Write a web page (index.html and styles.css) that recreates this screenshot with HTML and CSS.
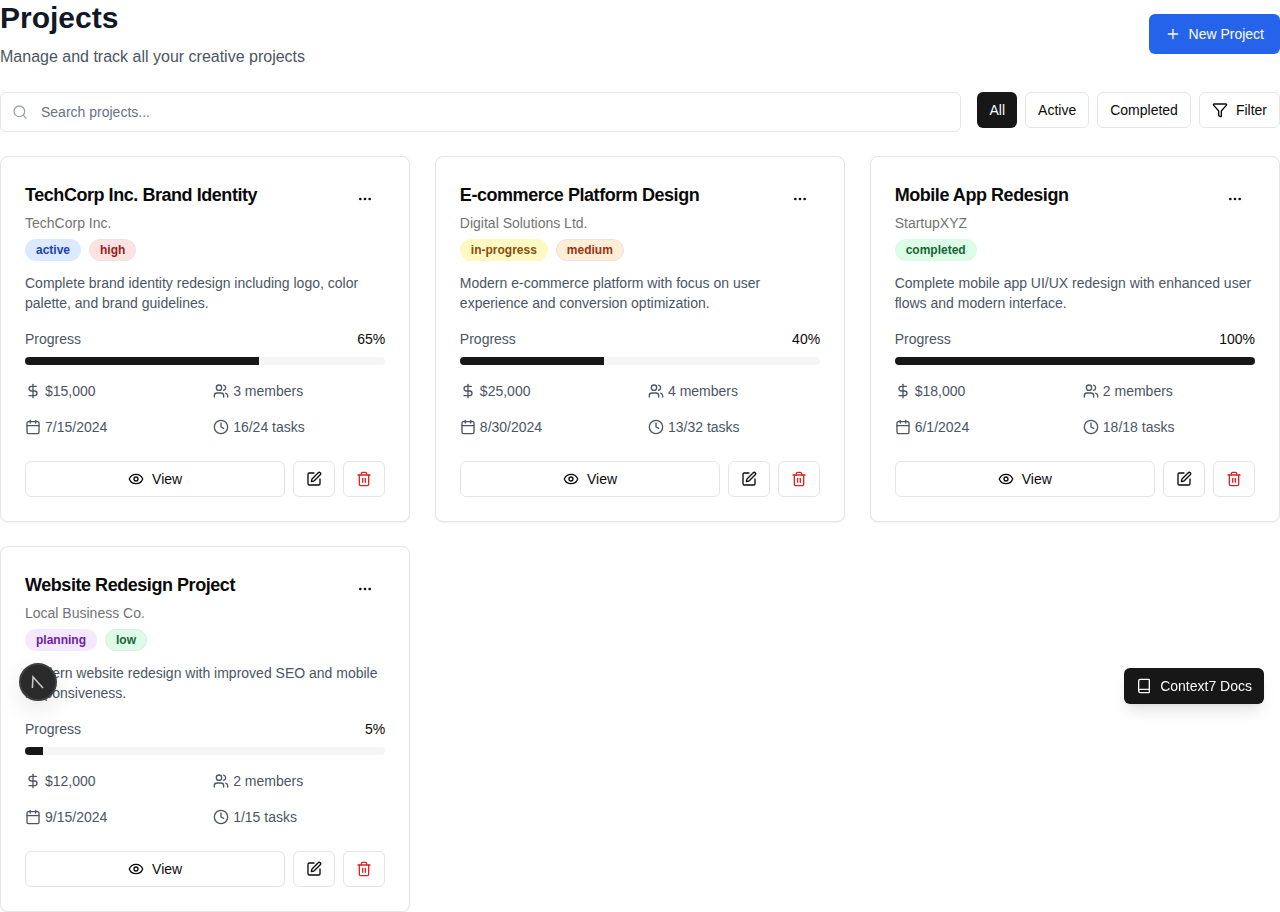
FILE: index.html
```html
<!DOCTYPE html>
<html lang="en">
  <head>
    <meta charset="UTF-8" />
    <meta name="viewport" content="width=device-width, initial-scale=1.0" />
    <title>Projects</title>
    <link rel="stylesheet" href="styles.css">
  </head>
  <body>
    <svg class="icon-defs" aria-hidden="true">
      <symbol id="i-search" viewBox="0 0 24 24"><circle cx="11" cy="11" r="8"/><path d="m21 21-4.3-4.3"/></symbol>
      <symbol id="i-plus" viewBox="0 0 24 24"><path d="M5 12h14"/><path d="M12 5v14"/></symbol>
      <symbol id="i-funnel" viewBox="0 0 24 24"><path d="M10 20a1 1 0 0 0 .553.895l2 1A1 1 0 0 0 14 21v-7a2 2 0 0 1 .517-1.341L21.74 4.67A1 1 0 0 0 21 3H3a1 1 0 0 0-.742 1.67l7.225 7.989A2 2 0 0 1 10 14z"/></symbol>
      <symbol id="i-ellipsis" viewBox="0 0 24 24"><circle cx="12" cy="12" r="1"/><circle cx="19" cy="12" r="1"/><circle cx="5" cy="12" r="1"/></symbol>
      <symbol id="i-dollar" viewBox="0 0 24 24"><path d="M12 2v20"/><path d="M17 5H9.5a3.5 3.5 0 0 0 0 7h5a3.5 3.5 0 0 1 0 7H6"/></symbol>
      <symbol id="i-users" viewBox="0 0 24 24"><path d="M16 21v-2a4 4 0 0 0-4-4H6a4 4 0 0 0-4 4v2"/><circle cx="9" cy="7" r="4"/><path d="M22 21v-2a4 4 0 0 0-3-3.87"/><path d="M16 3.13a4 4 0 0 1 0 7.75"/></symbol>
      <symbol id="i-calendar" viewBox="0 0 24 24"><path d="M8 2v4"/><path d="M16 2v4"/><rect width="18" height="18" x="3" y="4" rx="2"/><path d="M3 10h18"/></symbol>
      <symbol id="i-clock" viewBox="0 0 24 24"><circle cx="12" cy="12" r="10"/><path d="M12 6v6l4 2"/></symbol>
      <symbol id="i-eye" viewBox="0 0 24 24"><path d="M2.062 12.348a1 1 0 0 1 0-.696 10.75 10.75 0 0 1 19.876 0 1 1 0 0 1 0 .696 10.75 10.75 0 0 1-19.876 0"/><circle cx="12" cy="12" r="3"/></symbol>
      <symbol id="i-pen" viewBox="0 0 24 24"><path d="M12 3H5a2 2 0 0 0-2 2v14a2 2 0 0 0 2 2h14a2 2 0 0 0 2-2v-7"/><path d="M18.375 2.625a1 1 0 0 1 3 3l-9.013 9.014a2 2 0 0 1-.853.505l-2.873.84a.5.5 0 0 1-.62-.62l.84-2.873a2 2 0 0 1 .506-.852z"/></symbol>
      <symbol id="i-trash" viewBox="0 0 24 24"><path d="M3 6h18"/><path d="M19 6v14c0 1-1 2-2 2H7c-1 0-2-1-2-2V6"/><path d="M8 6V4c0-1 1-2 2-2h4c1 0 2 1 2 2v2"/><path d="M10 11v6"/><path d="M14 11v6"/></symbol>
      <symbol id="i-book" viewBox="0 0 24 24"><path d="M4 19.5v-15A2.5 2.5 0 0 1 6.5 2H19a1 1 0 0 1 1 1v18a1 1 0 0 1-1 1H6.5a1 1 0 0 1 0-5H20"/></symbol>
    </svg>

    <main class="page">
      <header class="page-header">
        <div>
          <h1>Projects</h1>
          <p class="page-sub">Manage and track all your creative projects</p>
        </div>
        <button class="new-button"><svg class="icon"><use href="#i-plus"/></svg>New Project</button>
      </header>

      <div class="toolbar">
        <label class="search">
          <svg class="icon"><use href="#i-search"/></svg>
          <input type="text" placeholder="Search projects..." />
        </label>
        <div class="filters">
          <button class="btn btn-dark">All</button>
          <button class="btn">Active</button>
          <button class="btn">Completed</button>
          <button class="btn"><svg class="icon"><use href="#i-funnel"/></svg>Filter</button>
        </div>
      </div>

      <section class="grid">
        <article class="card">
          <div class="card-top">
            <div class="card-heading">
              <h3>TechCorp Inc. Brand Identity</h3>
              <p class="client">TechCorp Inc.</p>
              <div class="badges">
                <span class="badge blue">active</span>
                <span class="badge red bordered">high</span>
              </div>
            </div>
            <button class="more"><svg class="icon"><use href="#i-ellipsis"/></svg></button>
          </div>
          <p class="desc">Complete brand identity redesign including logo, color palette, and brand guidelines.</p>
          <div class="progress-row"><span>Progress</span><span class="pct">65%</span></div>
          <div class="bar"><div class="bar-fill" style="width: 65%"></div></div>
          <div class="meta">
            <div class="meta-item"><svg class="icon"><use href="#i-dollar"/></svg>$15,000</div>
            <div class="meta-item"><svg class="icon"><use href="#i-users"/></svg>3 members</div>
            <div class="meta-item"><svg class="icon"><use href="#i-calendar"/></svg>7/15/2024</div>
            <div class="meta-item"><svg class="icon"><use href="#i-clock"/></svg>16/24 tasks</div>
          </div>
          <div class="actions">
            <button class="btn btn-view"><svg class="icon"><use href="#i-eye"/></svg>View</button>
            <button class="btn btn-icon"><svg class="icon"><use href="#i-pen"/></svg></button>
            <button class="btn btn-icon btn-delete"><svg class="icon"><use href="#i-trash"/></svg></button>
          </div>
        </article>

        <article class="card">
          <div class="card-top">
            <div class="card-heading">
              <h3>E-commerce Platform Design</h3>
              <p class="client">Digital Solutions Ltd.</p>
              <div class="badges">
                <span class="badge yellow">in-progress</span>
                <span class="badge orange bordered">medium</span>
              </div>
            </div>
            <button class="more"><svg class="icon"><use href="#i-ellipsis"/></svg></button>
          </div>
          <p class="desc">Modern e-commerce platform with focus on user experience and conversion optimization.</p>
          <div class="progress-row"><span>Progress</span><span class="pct">40%</span></div>
          <div class="bar"><div class="bar-fill" style="width: 40%"></div></div>
          <div class="meta">
            <div class="meta-item"><svg class="icon"><use href="#i-dollar"/></svg>$25,000</div>
            <div class="meta-item"><svg class="icon"><use href="#i-users"/></svg>4 members</div>
            <div class="meta-item"><svg class="icon"><use href="#i-calendar"/></svg>8/30/2024</div>
            <div class="meta-item"><svg class="icon"><use href="#i-clock"/></svg>13/32 tasks</div>
          </div>
          <div class="actions">
            <button class="btn btn-view"><svg class="icon"><use href="#i-eye"/></svg>View</button>
            <button class="btn btn-icon"><svg class="icon"><use href="#i-pen"/></svg></button>
            <button class="btn btn-icon btn-delete"><svg class="icon"><use href="#i-trash"/></svg></button>
          </div>
        </article>

        <article class="card">
          <div class="card-top">
            <div class="card-heading">
              <h3>Mobile App Redesign</h3>
              <p class="client">StartupXYZ</p>
              <div class="badges">
                <span class="badge green">completed</span>
              </div>
            </div>
            <button class="more"><svg class="icon"><use href="#i-ellipsis"/></svg></button>
          </div>
          <p class="desc">Complete mobile app UI/UX redesign with enhanced user flows and modern interface.</p>
          <div class="progress-row"><span>Progress</span><span class="pct">100%</span></div>
          <div class="bar"><div class="bar-fill" style="width: 100%"></div></div>
          <div class="meta">
            <div class="meta-item"><svg class="icon"><use href="#i-dollar"/></svg>$18,000</div>
            <div class="meta-item"><svg class="icon"><use href="#i-users"/></svg>2 members</div>
            <div class="meta-item"><svg class="icon"><use href="#i-calendar"/></svg>6/1/2024</div>
            <div class="meta-item"><svg class="icon"><use href="#i-clock"/></svg>18/18 tasks</div>
          </div>
          <div class="actions">
            <button class="btn btn-view"><svg class="icon"><use href="#i-eye"/></svg>View</button>
            <button class="btn btn-icon"><svg class="icon"><use href="#i-pen"/></svg></button>
            <button class="btn btn-icon btn-delete"><svg class="icon"><use href="#i-trash"/></svg></button>
          </div>
        </article>

        <article class="card">
          <div class="card-top">
            <div class="card-heading">
              <h3>Website Redesign Project</h3>
              <p class="client">Local Business Co.</p>
              <div class="badges">
                <span class="badge purple">planning</span>
                <span class="badge green bordered">low</span>
              </div>
            </div>
            <button class="more"><svg class="icon"><use href="#i-ellipsis"/></svg></button>
          </div>
          <p class="desc">Modern website redesign with improved SEO and mobile responsiveness.</p>
          <div class="progress-row"><span>Progress</span><span class="pct">5%</span></div>
          <div class="bar"><div class="bar-fill" style="width: 5%"></div></div>
          <div class="meta">
            <div class="meta-item"><svg class="icon"><use href="#i-dollar"/></svg>$12,000</div>
            <div class="meta-item"><svg class="icon"><use href="#i-users"/></svg>2 members</div>
            <div class="meta-item"><svg class="icon"><use href="#i-calendar"/></svg>9/15/2024</div>
            <div class="meta-item"><svg class="icon"><use href="#i-clock"/></svg>1/15 tasks</div>
          </div>
          <div class="actions">
            <button class="btn btn-view"><svg class="icon"><use href="#i-eye"/></svg>View</button>
            <button class="btn btn-icon"><svg class="icon"><use href="#i-pen"/></svg></button>
            <button class="btn btn-icon btn-delete"><svg class="icon"><use href="#i-trash"/></svg></button>
          </div>
        </article>
      </section>
    </main>

    <div class="dev-indicator">
      <svg width="16" height="16" viewBox="0 0 16 16" fill="none" stroke="#c4c4c4" stroke-width="1.6">
        <path d="M2.4 14 3 3l10 11"/>
      </svg>
    </div>
    <button class="docs-button"><svg class="icon"><use href="#i-book"/></svg>Context7 Docs</button>
  </body>
</html>
```

FILE: styles.css
```css
* {
  box-sizing: border-box;
}
body {
  margin: 0;
  font-family: "Liberation Sans", Arial, sans-serif;
  color: #0a0a0a;
  background-color: #fff;
}
h1, h3, p {
  margin: 0;
}
button {
  font-family: inherit;
  cursor: pointer;
}
.icon-defs {
  display: none;
}
.icon {
  width: 16px;
  height: 16px;
  flex-shrink: 0;
  fill: none;
  stroke: currentColor;
  stroke-width: 2;
  stroke-linecap: round;
  stroke-linejoin: round;
}

.page-header {
  display: flex;
  justify-content: space-between;
  align-items: center;
  height: 68px;
  margin-bottom: 24px;
}
h1 {
  font-size: 30px;
  line-height: 36px;
  font-weight: 700;
  color: #111827;
}
.page-sub {
  margin-top: 9px;
  font-size: 16px;
  line-height: 24px;
  color: #4b5563;
}
.new-button {
  display: flex;
  align-items: center;
  gap: 8px;
  height: 40px;
  padding: 0 16px;
  font-size: 14px;
  color: #fff;
  background-color: #2563eb;
  border: none;
  border-radius: 6px;
}

.toolbar {
  display: flex;
  align-items: flex-start;
  gap: 16px;
  margin-bottom: 24px;
}
.search {
  flex: 1;
  position: relative;
  display: block;
}
.search .icon {
  position: absolute;
  left: 12px;
  top: 12px;
  color: #9ca3af;
}
.search input {
  display: block;
  width: 100%;
  height: 40px;
  padding: 0 12px 0 40px;
  font-family: inherit;
  font-size: 14px;
  border: 1px solid #e5e5e5;
  border-radius: 6px;
  outline: none;
}
.search input::placeholder {
  color: #6b7280;
}
.filters {
  display: flex;
  gap: 8px;
}
.btn {
  display: flex;
  align-items: center;
  justify-content: center;
  gap: 8px;
  height: 36px;
  padding: 0 12px;
  font-size: 14px;
  color: #0a0a0a;
  background-color: #fff;
  border: 1px solid #e5e5e5;
  border-radius: 6px;
}
.btn-dark {
  color: #fafafa;
  background-color: #171717;
  border: none;
}

.grid {
  display: grid;
  grid-template-columns: repeat(3, 410.3px);
  justify-content: space-between;
  row-gap: 24px;
}
.card {
  padding: 24px;
  background-color: #fff;
  border: 1px solid #e5e5e5;
  border-radius: 8px;
  box-shadow: 0 1px 2px rgba(0, 0, 0, 0.05);
}
.card-top {
  display: flex;
  justify-content: space-between;
  align-items: flex-start;
}
h3 {
  font-size: 18px;
  line-height: 28px;
  font-weight: 700;
  letter-spacing: -0.025em;
}
.client {
  margin-top: 4px;
  font-size: 14px;
  line-height: 20px;
  color: #737373;
}
.badges {
  display: flex;
  gap: 8px;
  margin-top: 6px;
}
.badge {
  height: 22px;
  padding: 0 11px;
  font-size: 12px;
  line-height: 22px;
  font-weight: 700;
  border-radius: 11px;
}
.bordered {
  padding: 0 10px;
  line-height: 20px;
  border: 1px solid #e5e5e5;
}
.blue { color: #1e40af; background-color: #dbeafe; }
.red { color: #991b1b; background-color: #fee2e2; }
.yellow { color: #854d0e; background-color: #fef9c3; }
.orange { color: #9a3412; background-color: #ffedd5; }
.green { color: #166534; background-color: #dcfce7; }
.purple { color: #6b21a8; background-color: #f3e8ff; }
.more {
  display: flex;
  align-items: center;
  justify-content: center;
  width: 40px;
  height: 36px;
  padding: 0;
  color: #0a0a0a;
  background: none;
  border: none;
}

.desc {
  margin-top: 12px;
  font-size: 14px;
  line-height: 20px;
  color: #4b5563;
}
.progress-row {
  display: flex;
  justify-content: space-between;
  margin-top: 16px;
  font-size: 14px;
  line-height: 20px;
  color: #4b5563;
}
.pct {
  color: #0a0a0a;
}
.bar {
  height: 8px;
  margin-top: 8px;
  background-color: #f5f5f5;
  border-radius: 4px;
  overflow: hidden;
}
.bar-fill {
  height: 100%;
  background-color: #171717;
}
.meta {
  display: grid;
  grid-template-columns: 1fr 1fr;
  gap: 16px;
  margin-top: 16px;
}
.meta-item {
  display: flex;
  align-items: center;
  gap: 4px;
  font-size: 14px;
  line-height: 20px;
  color: #4b5563;
}
.actions {
  display: flex;
  gap: 8px;
  margin-top: 24px;
}
.btn-view {
  flex: 1;
}
.btn-icon {
  width: 42px;
  padding: 0;
}
.btn-delete {
  color: #dc2626;
}

.dev-indicator {
  position: fixed;
  left: 19px;
  top: 663px;
  display: flex;
  align-items: center;
  justify-content: center;
  width: 38px;
  height: 38px;
  background-color: #2a2a2a;
  border: 2px solid #3f3f3f;
  border-radius: 50%;
  box-shadow: 0 8px 24px rgba(0, 0, 0, 0.1);
}
.docs-button {
  position: fixed;
  right: 16px;
  top: 668px;
  display: flex;
  align-items: center;
  gap: 8px;
  height: 36px;
  padding: 0 12px;
  font-size: 14px;
  color: #fafafa;
  background-color: #171717;
  border: none;
  border-radius: 6px;
  box-shadow: 0 10px 15px -3px rgba(0, 0, 0, 0.1), 0 4px 6px -4px rgba(0, 0, 0, 0.1);
}
```
